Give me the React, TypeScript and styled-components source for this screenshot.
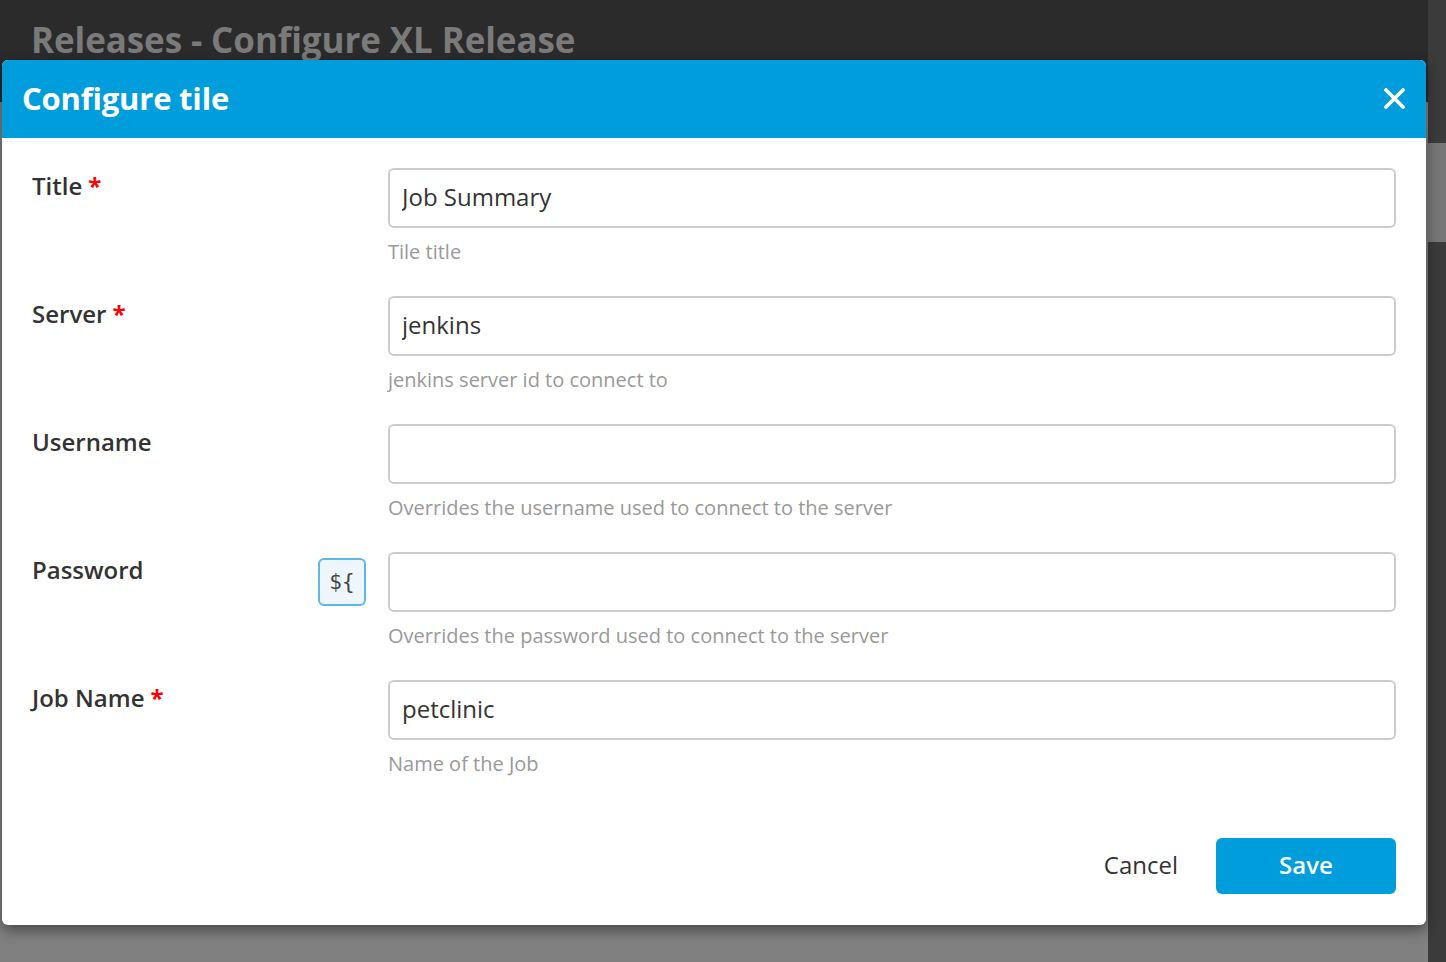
import React from "react";
import styled, { createGlobalStyle } from "styled-components";

const GlobalStyle = createGlobalStyle`
  html, body { margin: 0; padding: 0; }
  body {
    font-family: "Open Sans", "Noto Sans", sans-serif;
    background: #808080;
    overflow: hidden;
  }
  * { box-sizing: border-box; }
`;

const Page = styled.div`
  display: flex;
  width: 1446px;
  height: 962px;
  position: relative;
`;

const Main = styled.div`
  flex: 1;
  display: flex;
  flex-direction: column;
`;

const TopBar = styled.div`
  height: 102px;
  background: #2b2b2b;
  padding: 16px 0 0 31px;
`;

const PageTitle = styled.h1`
  margin: 0;
  font-size: 35px;
  font-weight: 700;
  color: #7a7a7a;
  line-height: 48px;
  letter-spacing: -0.1px;
`;

const Backdrop = styled.div`
  flex: 1;
  background: #808080;
`;

const ScrollTrack = styled.div`
  width: 18px;
  background: #3b3b3b;
  padding-top: 143px;
`;

const ScrollThumb = styled.div`
  height: 99px;
  background: #777777;
`;

const Modal = styled.div`
  position: absolute;
  top: 60px;
  left: 2px;
  width: 1424px;
  background: #fff;
  border-radius: 6px;
  box-shadow: 0 5px 14px rgba(0, 0, 0, 0.45);
  overflow: hidden;
`;

const ModalHeader = styled.div`
  height: 78px;
  background: #009ddd;
  display: flex;
  align-items: center;
  justify-content: space-between;
  padding: 0 21px 3px 20px;
`;

const ModalTitle = styled.h2`
  margin: 0;
  color: #fff;
  font-size: 31px;
  font-weight: 700;
  letter-spacing: -0.2px;
`;

const CloseButton = styled.button`
  border: 0;
  background: transparent;
  padding: 0;
  width: 22px;
  height: 22px;
  margin-top: 2px;
  display: flex;
  align-items: center;
  justify-content: center;
  cursor: pointer;
`;

const Body = styled.div`
  padding: 30px 30px 0 30px;
`;

const Row = styled.div`
  display: grid;
  grid-template-columns: 356px 1fr;
  margin-bottom: 30px;
`;

const LabelCell = styled.div`
  display: flex;
  justify-content: space-between;
  align-items: flex-start;
  padding-right: 22px;
`;

const Label = styled.label`
  font-size: 24px;
  font-weight: 600;
  color: #333;
  line-height: 36px;
  margin-top: 0;
`;

const Required = styled.span`
  color: #f00;
  font-weight: 700;
  margin-left: 6px;
`;

const VarButton = styled.button`
  width: 48px;
  height: 48px;
  margin-top: 6px;
  border: 2px solid #5cb9e6;
  background: #eef6fc;
  border-radius: 6px;
  font-family: "DejaVu Sans Mono", "Liberation Mono", monospace;
  font-size: 21px;
  color: #444;
  display: flex;
  align-items: center;
  justify-content: center;
  padding: 0;
`;

const FieldCell = styled.div`
  display: flex;
  flex-direction: column;
`;

const Input = styled.input`
  height: 60px;
  width: 100%;
  border: 2px solid #cccccc;
  border-radius: 6px;
  padding: 0 12px 4px;
  font-family: "Open Sans", sans-serif;
  font-size: 24px;
  color: #333;
  outline: none;
`;

const Help = styled.div`
  margin-top: 10px;
  font-size: 20px;
  line-height: 28px;
  color: #999;
`;

const Footer = styled.div`
  display: flex;
  justify-content: flex-end;
  align-items: center;
  gap: 38px;
  padding: 30px 30px 31px 0;
`;

const CancelButton = styled.button`
  border: 0;
  background: transparent;
  font-family: "Open Sans", sans-serif;
  font-size: 24px;
  color: #333;
  padding: 0 0 3px;
`;

const SaveButton = styled.button`
  width: 180px;
  height: 56px;
  border: 0;
  border-radius: 6px;
  background: #009ddd;
  color: #fff;
  font-family: "Open Sans", sans-serif;
  font-size: 24px;
  font-weight: 600;
  padding: 0 0 3px;
`;

type Field = {
  label: string;
  required?: boolean;
  value: string;
  help: string;
  variable?: boolean;
};

const fields: Field[] = [
  { label: "Title", required: true, value: "Job Summary", help: "Tile title" },
  { label: "Server", required: true, value: "jenkins", help: "jenkins server id to connect to" },
  { label: "Username", value: "", help: "Overrides the username used to connect to the server" },
  { label: "Password", value: "", help: "Overrides the password used to connect to the server", variable: true },
  { label: "Job Name", required: true, value: "petclinic", help: "Name of the Job" },
];

export default function App() {
  return (
    <>
      <GlobalStyle />
      <Page>
        <Main>
          <TopBar>
            <PageTitle>Releases - Configure XL Release</PageTitle>
          </TopBar>
          <Backdrop />
        </Main>
        <ScrollTrack>
          <ScrollThumb />
        </ScrollTrack>
        <Modal>
          <ModalHeader>
            <ModalTitle>Configure tile</ModalTitle>
            <CloseButton aria-label="Close">
              <svg width="21" height="21" viewBox="0 0 21 21">
                <path d="M2 2 L19 19 M19 2 L2 19" stroke="#fff" strokeWidth="3.6" strokeLinecap="square" />
              </svg>
            </CloseButton>
          </ModalHeader>
          <Body>
            {fields.map((f) => (
              <Row key={f.label}>
                <LabelCell>
                  <Label>
                    {f.label}
                    {f.required && <Required>*</Required>}
                  </Label>
                  {f.variable && <VarButton>{"${"}</VarButton>}
                </LabelCell>
                <FieldCell>
                  <Input defaultValue={f.value} type="text" />
                  <Help>{f.help}</Help>
                </FieldCell>
              </Row>
            ))}
          </Body>
          <Footer>
            <CancelButton>Cancel</CancelButton>
            <SaveButton>Save</SaveButton>
          </Footer>
        </Modal>
      </Page>
    </>
  );
}
